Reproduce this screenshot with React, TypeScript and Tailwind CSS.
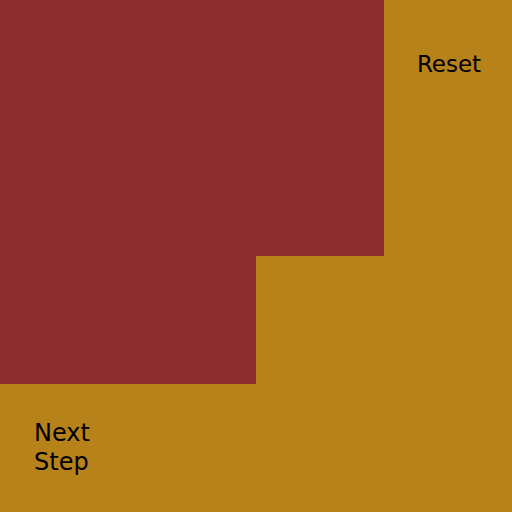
const cells: (string | null)[] = [
  'red', 'red', 'red', 'reset',
  'red', 'red', 'red', null,
  'red', 'red', null, null,
  'next', null, null, null,
];

export default function App() {
  return (
    <div className="grid h-[512px] w-[512px] grid-cols-4 grid-rows-4 bg-[#b8821a] font-['DejaVu_Sans',sans-serif] leading-[29px] text-black">
      {cells.map((c, i) => {
        if (c === 'red') return <div key={i} className="bg-[#8b2c2f]" />;
        if (c === 'reset')
          return (
            <button key={i} className="flex items-center justify-center pl-[2px] text-[23px]">
              Reset
            </button>
          );
        if (c === 'next')
          return (
            <button key={i} className="flex items-center justify-start pl-[34px] text-[24px]">
              <span className="text-left">
                Next
                <br />
                Step
              </span>
            </button>
          );
        return <div key={i} />;
      })}
    </div>
  );
}
